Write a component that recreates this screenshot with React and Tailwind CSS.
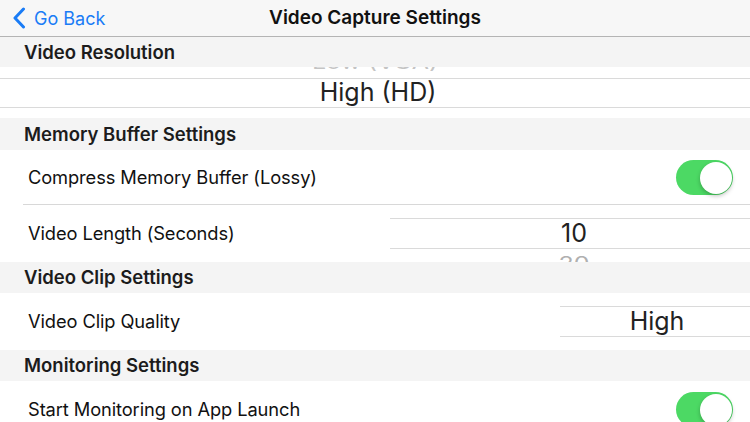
const font = { fontFamily: "Inter, 'Noto Sans', sans-serif" };

/* ================= SECTION HEADER ================= */
function SectionHeader({ title, h = "h-[31px]" }) {
  return (
    <div className={`${h} bg-[#f4f4f4] flex items-center pl-[24px]`}>
      <span className="text-[18.5px] font-semibold text-[#1c1c1c] mt-[1px]">{title}</span>
    </div>
  );
}

/* ================= TOGGLE ================= */
function Toggle() {
  return (
    <div className="w-[57px] h-[35px] rounded-full bg-[#4cd964] flex items-center justify-end pr-[1.5px]">
      <div className="w-[32px] h-[32px] rounded-full bg-white shadow-[0_2px_4px_rgba(0,0,0,0.25)]" />
    </div>
  );
}

/* ================= ROW ================= */
function Row({ label, children, h = "h-[57px]", divider = false }) {
  return (
    <div className={`${h} bg-white flex items-center relative`}>
      <span className="pl-[28px] text-[18.3px] text-[#111] tracking-[-0.1px]">{label}</span>
      <div className="ml-auto h-full flex items-center">{children}</div>
      {divider && <div className="absolute left-[23px] right-0 bottom-0 h-px bg-[#d8d8d8]" />}
    </div>
  );
}

export default function App() {
  return (
    <div className="w-[750px] h-[422px] overflow-hidden bg-white" style={font}>
      {/* NAV */}
      <div className="h-[37px] bg-[#f7f7f7] border-b border-[#b4b4b4] flex items-center relative">
        <div className="flex items-center text-[#1a7cf6] pl-[12px]">
          <svg width="14" height="22" viewBox="0 0 14 22" fill="none" stroke="currentColor" strokeWidth="3" strokeLinecap="round" strokeLinejoin="round">
            <polyline points="11.5,2 3,11 11.5,20" />
          </svg>
          <span className="text-[18px] ml-[8px]">Go Back</span>
        </div>
        <div className="absolute inset-0 flex items-center justify-center pointer-events-none">
          <span className="text-[19px] font-semibold text-[#111]">Video Capture Settings</span>
        </div>
      </div>

      <SectionHeader title="Video Resolution" h="h-[30px]" />

      {/* RESOLUTION PICKER */}
      <div className="h-[51px] bg-white overflow-hidden flex flex-col">
        <div className="h-[30px] mt-[-19px] shrink-0 flex items-center justify-center text-[25px] text-[#c4c4c4] scale-y-75">
          Low (VGA)
        </div>
        <div className="h-[30px] shrink-0 border-y border-[#dadada] flex items-center justify-center text-[25px] text-[#222] pl-[6px]">
          High (HD)
        </div>
      </div>

      <SectionHeader title="Memory Buffer Settings" h="h-[32px]" />

      <Row label="Compress Memory Buffer (Lossy)" h="h-[55px]" divider>
        <div className="pr-[17px]">
          <Toggle />
        </div>
      </Row>

      <Row label="Video Length (Seconds)">
        <div className="w-[360px] h-full overflow-hidden flex flex-col">
          <div className="h-[13px] shrink-0" />
          <div className="h-[31px] shrink-0 border-y border-[#dadada] flex items-center justify-center text-[25px] text-[#222] pl-[8px]">
            10
          </div>
          <div className="h-[30px] shrink-0 flex items-center justify-center text-[25px] text-[#b0b0b0] scale-y-75 pl-[8px]">
            20
          </div>
        </div>
      </Row>

      <SectionHeader title="Video Clip Settings" />

      <Row label="Video Clip Quality">
        <div className="w-[190px] h-full overflow-hidden flex flex-col">
          <div className="h-[13px] shrink-0" />
          <div className="h-[31px] shrink-0 border-y border-[#dadada] flex items-center justify-center text-[25px] text-[#222] pl-[4px]">
            High
          </div>
        </div>
      </Row>

      <SectionHeader title="Monitoring Settings" />

      <Row label="Start Monitoring on App Launch">
        <div className="pr-[17px] self-start pt-[11px]">
          <Toggle />
        </div>
      </Row>
    </div>
  );
}
